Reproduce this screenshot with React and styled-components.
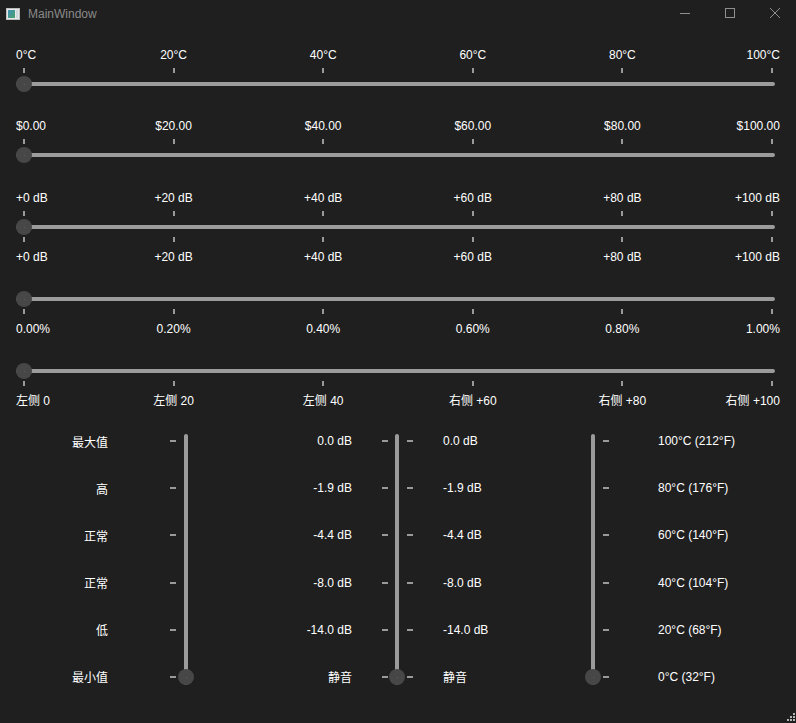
import React from 'react';
import styled, { createGlobalStyle } from 'styled-components';

const GlobalStyle = createGlobalStyle`
  html, body {
    margin: 0;
    padding: 0;
    background: #1f1f1f;
  }
  body {
    font-family: "Liberation Sans", "Noto Sans CJK SC", sans-serif;
    font-size: 12px;
    color: #ffffff;
  }
`;

const Window = styled.div`
  width: 796px;
  height: 723px;
  background: #1f1f1f;
  display: flex;
  flex-direction: column;
  overflow: hidden;
`;

const TitleBar = styled.div`
  height: 28px;
  display: flex;
  align-items: center;
  flex-shrink: 0;
`;

const AppIcon = styled.svg`
  width: 14px;
  height: 12px;
  margin: 0 8px 0 6px;
`;

const Title = styled.span`
  color: #8a8a8a;
  font-size: 12px;
  flex: 1;
`;

const Controls = styled.div`
  display: flex;
  align-self: flex-start;
  margin-right: -1px;
`;

const ControlButton = styled.div`
  width: 45px;
  height: 26px;
  display: flex;
  align-items: center;
  justify-content: center;
  color: #8f8f8f;
`;

const Content = styled.div`
  display: flex;
  flex-direction: column;
  padding: 19px 16px 0;
`;

const SliderBlock = styled.div`
  display: flex;
  flex-direction: column;
  margin-top: ${(p) => p.$mt || 0}px;
`;

const LabelRow = styled.div`
  height: 16px;
  line-height: 16px;
  display: flex;
  justify-content: space-between;
  padding: 0 8px;
  margin-top: ${(p) => p.$mt || 0}px;
  white-space: nowrap;
`;

const LabelCell = styled.div`
  width: 0;
  display: flex;
  justify-content: ${(p) =>
    p.$align === 'start' ? 'flex-start' : p.$align === 'end' ? 'flex-end' : 'center'};
  transform: translateX(
    ${(p) => (p.$align === 'start' ? '-8px' : p.$align === 'end' ? '8px' : '0')}
  );
`;

const TickRow = styled.div`
  height: 5px;
  display: flex;
  justify-content: space-between;
  padding: 0 7px;
  margin-top: ${(p) => p.$mt || 0}px;
`;

const HTick = styled.div`
  width: 2px;
  height: 5px;
  background: #9a9a9a;
`;

const HGroove = styled.div`
  position: relative;
  height: 16px;
  display: flex;
  align-items: center;
  padding-right: 5px;
  margin-top: ${(p) => p.$mt || 0}px;
`;

const HTrack = styled.div`
  flex: 1;
  height: 4px;
  border-radius: 2px;
  background: #9b9b9b;
`;

const Handle = styled.div`
  position: absolute;
  width: 16px;
  height: 16px;
  border-radius: 50%;
  background: #474747;
  display: flex;
  align-items: center;
  justify-content: center;
  ${(p) => (p.$vertical ? 'left: 0; bottom: 0;' : 'left: 0; top: 0;')}

  &::after {
    content: '';
    width: 1px;
    height: 1px;
    background: #5e5e5e;
  }
`;

const VRow = styled.div`
  display: flex;
  height: 251px;
  margin-top: 25px;
`;

const VLabelCol = styled.div`
  width: ${(p) => p.$w}px;
  margin-left: ${(p) => p.$ml || 0}px;
  display: flex;
  flex-direction: column;
  justify-content: space-between;
  align-items: ${(p) => (p.$align === 'end' ? 'flex-end' : 'flex-start')};
  padding: 7px 0 8px;
  white-space: nowrap;
`;

const VLabel = styled.div`
  height: 0;
  display: flex;
  align-items: center;
`;

const VTickCol = styled.div`
  width: 6px;
  margin-left: ${(p) => p.$ml || 0}px;
  display: flex;
  flex-direction: column;
  justify-content: space-between;
  padding: 6px 0 7px;
`;

const VTick = styled.div`
  width: 6px;
  height: 2px;
  background: #9a9a9a;
`;

const VGroove = styled.div`
  position: relative;
  width: 16px;
  margin-left: ${(p) => p.$ml || 0}px;
  display: flex;
  justify-content: center;
`;

const VTrack = styled.div`
  width: 4px;
  height: 100%;
  border-radius: 2px;
  background: #9b9b9b;
`;

const Footer = styled.div`
  margin-top: auto;
  display: flex;
  justify-content: flex-end;
  padding: 0 1px 2px 0;
`;

const alignFor = (i, n) => (i === 0 ? 'start' : i === n - 1 ? 'end' : 'center');

const Labels = ({ items, mt }) => (
  <LabelRow $mt={mt}>
    {items.map((t, i) => (
      <LabelCell key={i} $align={alignFor(i, items.length)}>
        {t}
      </LabelCell>
    ))}
  </LabelRow>
);

const Ticks = ({ mt }) => (
  <TickRow $mt={mt}>
    {[0, 1, 2, 3, 4, 5].map((i) => (
      <HTick key={i} />
    ))}
  </TickRow>
);

const HSlider = ({ above, below, ticksAbove, ticksBelow, mt }) => (
  <SliderBlock $mt={mt}>
    {above && <Labels items={above} />}
    {ticksAbove && <Ticks mt={5} />}
    <HGroove $mt={ticksAbove ? 3 : 0}>
      <HTrack />
      <Handle />
    </HGroove>
    {ticksBelow && <Ticks mt={2} />}
    {below && <Labels items={below} mt={7} />}
  </SliderBlock>
);

const VLabels = ({ items, w, ml, align }) => (
  <VLabelCol $w={w} $ml={ml} $align={align}>
    {items.map((t, i) => (
      <VLabel key={i}>{t}</VLabel>
    ))}
  </VLabelCol>
);

const VTicks = ({ ml }) => (
  <VTickCol $ml={ml}>
    {[0, 1, 2, 3, 4, 5].map((i) => (
      <VTick key={i} />
    ))}
  </VTickCol>
);

const VSliderGroove = ({ ml }) => (
  <VGroove $ml={ml}>
    <VTrack />
    <Handle $vertical />
  </VGroove>
);

const temps = ['0°C', '20°C', '40°C', '60°C', '80°C', '100°C'];
const money = ['$0.00', '$20.00', '$40.00', '$60.00', '$80.00', '$100.00'];
const gains = ['+0 dB', '+20 dB', '+40 dB', '+60 dB', '+80 dB', '+100 dB'];
const percents = ['0.00%', '0.20%', '0.40%', '0.60%', '0.80%', '1.00%'];
const balance = ['左侧 0', '左侧 20', '左侧 40', '右侧 +60', '右侧 +80', '右侧 +100'];

const levels = ['最大值', '高', '正常', '正常', '低', '最小值'];
const decibels = ['0.0 dB', '-1.9 dB', '-4.4 dB', '-8.0 dB', '-14.0 dB', '静音'];
const degrees = [
  '100°C (212°F)',
  '80°C (176°F)',
  '60°C (140°F)',
  '40°C (104°F)',
  '20°C (68°F)',
  '0°C (32°F)',
];

export default function App() {
  return (
    <>
      <GlobalStyle />
      <Window>
        <TitleBar>
          <AppIcon viewBox="0 0 14 12">
            <defs>
              <linearGradient id="appg" x1="0" y1="0" x2="1" y2="1">
                <stop offset="0" stopColor="#3f8fb8" />
                <stop offset="1" stopColor="#4aa36a" />
              </linearGradient>
            </defs>
            <rect x="0.5" y="0.5" width="13" height="11" fill="#e8e8e8" stroke="#bdbdbd" />
            <rect x="2" y="2" width="7" height="8" fill="url(#appg)" />
            <rect x="10" y="2" width="2" height="8" fill="#cfd8dc" />
          </AppIcon>
          <Title>MainWindow</Title>
          <Controls>
            <ControlButton>
              <svg width="10" height="10" viewBox="0 0 10 10">
                <path d="M0 5.5h10" stroke="currentColor" strokeWidth="1" />
              </svg>
            </ControlButton>
            <ControlButton>
              <svg width="10" height="10" viewBox="0 0 10 10">
                <rect x="0.5" y="0.5" width="9" height="9" fill="none" stroke="currentColor" />
              </svg>
            </ControlButton>
            <ControlButton>
              <svg width="10" height="10" viewBox="0 0 10 10">
                <path d="M0 0L10 10M10 0L0 10" stroke="currentColor" strokeWidth="1" />
              </svg>
            </ControlButton>
          </Controls>
        </TitleBar>

        <Content>
          <HSlider above={temps} ticksAbove />
          <HSlider above={money} ticksAbove mt={26} />
          <HSlider above={gains} below={gains} ticksAbove ticksBelow mt={27} />
          <HSlider below={percents} ticksBelow mt={26} />
          <HSlider below={balance} ticksBelow mt={26} />

          <VRow>
            <VLabels items={levels} w={92} align="end" />
            <VTicks ml={62} />
            <VSliderGroove ml={2} />
            <VLabels items={decibels} w={158} align="end" />
            <VTicks ml={30} />
            <VSliderGroove ml={1} />
            <VTicks ml={2} />
            <VLabels items={decibels} w={142} ml={30} align="start" />
            <VSliderGroove />
            <VTicks ml={2} />
            <VLabels items={degrees} w={110} ml={49} align="start" />
          </VRow>
        </Content>

        <Footer>
          <svg width="8" height="8" viewBox="0 0 8 8">
            <g fill="#b4b4b4">
              <rect x="6" y="0" width="2" height="2" />
              <rect x="3" y="3" width="2" height="2" />
              <rect x="6" y="3" width="2" height="2" />
              <rect x="0" y="6" width="2" height="2" />
              <rect x="3" y="6" width="2" height="2" />
              <rect x="6" y="6" width="2" height="2" />
            </g>
          </svg>
        </Footer>
      </Window>
    </>
  );
}
